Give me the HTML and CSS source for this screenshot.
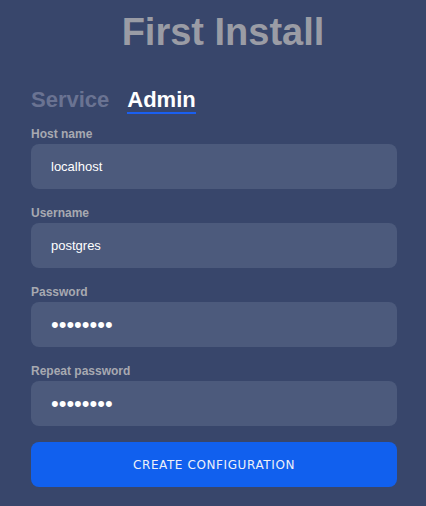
FILE: index.html
```html
<!DOCTYPE html>
<html lang="en">
<head>
<meta charset="utf-8">
<title>First Install</title>
<link rel="stylesheet" href="styles.css">
</head>
<body>
<main class="page">
  <h1 class="title">First Install</h1>
  <nav class="tabs">
    <span class="tab">Service</span>
    <span class="tab tab-active">Admin</span>
  </nav>
  <form class="form">
    <label class="field">
      <span class="label">Host name</span>
      <input class="input" type="text" value="localhost">
    </label>
    <label class="field">
      <span class="label">Username</span>
      <input class="input" type="text" value="postgres">
    </label>
    <label class="field">
      <span class="label">Password</span>
      <input class="input input-pass" type="password" value="postgres">
    </label>
    <label class="field">
      <span class="label">Repeat password</span>
      <input class="input input-pass" type="password" value="postgres">
    </label>
    <button class="button" type="button">Create configuration</button>
  </form>
</main>
</body>
</html>
```

FILE: styles.css
```css
html, body {
  margin: 0;
  padding: 0;
  background: #38466b;
}
body {
  font-family: "Liberation Sans", Arial, sans-serif;
  width: 426px;
  height: 506px;
  overflow: hidden;
}
.page {
  padding: 10px 29px 0 31px;
}
.title {
  margin: 0 0 0 18px;
  font-size: 38px;
  line-height: 44px;
  font-weight: bold;
  color: #9a9ca5;
  text-align: center;
}
.tabs {
  display: flex;
  gap: 18px;
  margin-top: 34px;
}
.tab {
  font-size: 22px;
  line-height: 24px;
  font-weight: bold;
  color: #6a7392;
  border-bottom: 2px solid transparent;
}
.tab-active {
  color: #ffffff;
  border-bottom-color: #1a5ff0;
}
.form {
  display: flex;
  flex-direction: column;
  margin-top: 13px;
}
.field {
  display: flex;
  flex-direction: column;
  gap: 3px;
  margin-bottom: 17px;
}
.field:last-of-type {
  margin-bottom: 16px;
}
.label {
  font-size: 12px;
  line-height: 14px;
  font-weight: bold;
  color: #a7a9b1;
}
.input {
  box-sizing: border-box;
  height: 45px;
  width: 100%;
  border: none;
  outline: none;
  border-radius: 8px;
  background: #4c5a7c;
  color: #ffffff;
  padding: 0 20px;
  font-family: "Liberation Sans", Arial, sans-serif;
  font-size: 13px;
}
.input-pass {
  font-size: 22px;
  letter-spacing: 0;
}
.button {
  box-sizing: border-box;
  height: 45px;
  width: 100%;
  border: none;
  border-radius: 8px;
  background: #1160ee;
  color: #eef0f8;
  font-family: "DejaVu Sans", Verdana, sans-serif;
  font-size: 12px;
  letter-spacing: 0.6px;
  text-transform: uppercase;
  cursor: pointer;
}
```
